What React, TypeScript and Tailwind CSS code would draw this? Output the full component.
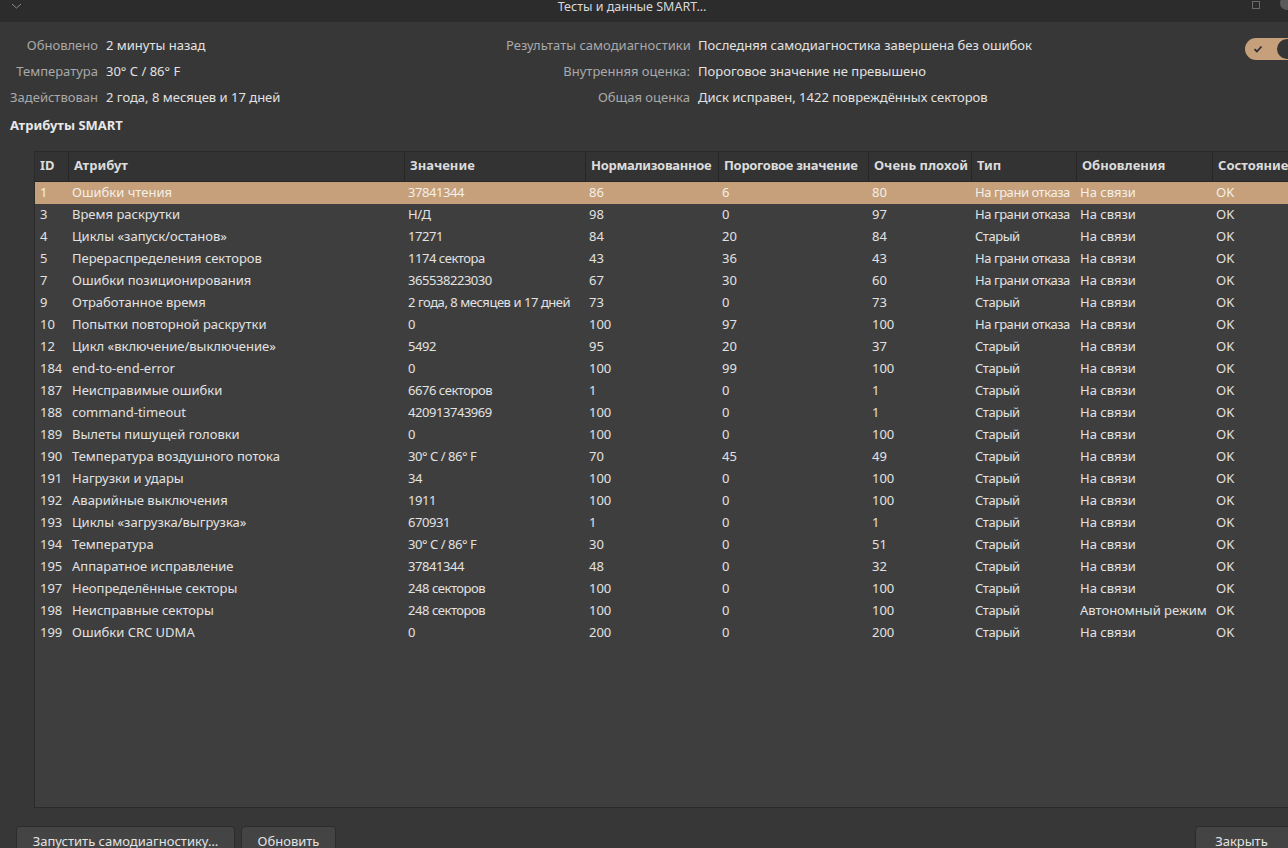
const rows: string[][] = [
  ["1", "Ошибки чтения", "37841344", "86", "6", "80", "На грани отказа", "На связи", "OK"],
  ["3", "Время раскрутки", "Н/Д", "98", "0", "97", "На грани отказа", "На связи", "OK"],
  ["4", "Циклы «запуск/останов»", "17271", "84", "20", "84", "Старый", "На связи", "OK"],
  ["5", "Перераспределения секторов", "1174 сектора", "43", "36", "43", "На грани отказа", "На связи", "OK"],
  ["7", "Ошибки позиционирования", "365538223030", "67", "30", "60", "На грани отказа", "На связи", "OK"],
  ["9", "Отработанное время", "2 года, 8 месяцев и 17 дней", "73", "0", "73", "Старый", "На связи", "OK"],
  ["10", "Попытки повторной раскрутки", "0", "100", "97", "100", "На грани отказа", "На связи", "OK"],
  ["12", "Цикл «включение/выключение»", "5492", "95", "20", "37", "Старый", "На связи", "OK"],
  ["184", "end-to-end-error", "0", "100", "99", "100", "Старый", "На связи", "OK"],
  ["187", "Неисправимые ошибки", "6676 секторов", "1", "0", "1", "Старый", "На связи", "OK"],
  ["188", "command-timeout", "420913743969", "100", "0", "1", "Старый", "На связи", "OK"],
  ["189", "Вылеты пишущей головки", "0", "100", "0", "100", "Старый", "На связи", "OK"],
  ["190", "Температура воздушного потока", "30° C / 86° F", "70", "45", "49", "Старый", "На связи", "OK"],
  ["191", "Нагрузки и удары", "34", "100", "0", "100", "Старый", "На связи", "OK"],
  ["192", "Аварийные выключения", "1911", "100", "0", "100", "Старый", "На связи", "OK"],
  ["193", "Циклы «загрузка/выгрузка»", "670931", "1", "0", "1", "Старый", "На связи", "OK"],
  ["194", "Температура", "30° C / 86° F", "30", "0", "51", "Старый", "На связи", "OK"],
  ["195", "Аппаратное исправление", "37841344", "48", "0", "32", "Старый", "На связи", "OK"],
  ["197", "Неопределённые секторы", "248 секторов", "100", "0", "100", "Старый", "На связи", "OK"],
  ["198", "Неисправные секторы", "248 секторов", "100", "0", "100", "Старый", "Автономный режим", "OK"],
  ["199", "Ошибки CRC UDMA", "0", "200", "0", "200", "Старый", "На связи", "OK"],
];

const headers = ["ID", "Атрибут", "Значение", "Нормализованное", "Пороговое значение", "Очень плохой", "Тип", "Обновления", "Состояние"];
const widths = ["w-[33px]", "w-[336px]", "w-[181px]", "w-[133px]", "w-[150px]", "w-[103px]", "w-[105px]", "w-[136px]", "w-[90px]"];

const info = [
  ["Обновлено", "2 минуты назад", "Результаты самодиагностики", "Последняя самодиагностика завершена без ошибок"],
  ["Температура", "30° C / 86° F", "Внутренняя оценка:", "Пороговое значение не превышено"],
  ["Задействован", "2 года, 8 месяцев и 17 дней", "Общая оценка", "Диск исправен, 1422 повреждённых секторов"],
];

export default function App() {
  return (
    <div
      className="w-[1288px] h-[848px] overflow-hidden bg-[#373737] text-[13px] text-[#e2e2e2] flex flex-col"
      style={{ fontFamily: '"Noto Sans", "Liberation Sans", sans-serif' }}
    >
      {/* title bar */}
      <div className="h-[22px] shrink-0 bg-[#2c2c2c] flex items-start relative">
        <svg className="ml-[11px] mt-[3px]" width="11" height="6" viewBox="0 0 11 6">
          <path d="M1 1l4.5 4L10 1" stroke="#8a8a8a" strokeWidth="1" fill="none" />
        </svg>
        <div className="flex-1 text-center text-[#d8d8d8] text-[12.5px] leading-[14px] pr-[10px]">Тесты и данные SMART…</div>
        <div className="w-[8px] h-[8px] border border-[#6a6a6a] mt-[1px] mr-[20px]" />
        <div className="w-[14px] h-[14px] rounded-full bg-[#5a5a5a] -mr-[6px] -mt-[4px]" />
      </div>

      {/* info */}
      <div className="flex pt-[11px]">
        <div className="grid grid-cols-[88px_392px_184px_auto] gap-x-2 pl-[10px] auto-rows-[26px] items-center">
          {info.map((r, i) => (
            <div key={i} className="contents">
              <div className="text-right text-[#a9a9a9] whitespace-nowrap">{r[0]}</div>
              <div className="whitespace-nowrap">{r[1]}</div>
              <div className="text-right text-[#a9a9a9] whitespace-nowrap">{r[2]}</div>
              <div className="whitespace-nowrap">{r[3]}</div>
            </div>
          ))}
        </div>
        <div className="ml-auto mt-[5px] -mr-[10px] w-[53px] h-[22px] rounded-full bg-[#c5a07b] flex items-center justify-between px-[1px]">
          <svg className="ml-[7px]" width="10" height="8" viewBox="0 0 10 8">
            <path d="M1.5 4.2l2.4 2.3L8.5 1.5" stroke="#2d2d3a" strokeWidth="1.8" fill="none" />
          </svg>
          <div className="w-[20px] h-[20px] rounded-full bg-[#353535]" />
        </div>
      </div>

      <div className="pl-[10px] pt-[5px] h-[29px] font-bold text-[#e8e8e8]">Атрибуты SMART</div>

      {/* table */}
      <div className="ml-[34px] mt-[15px] h-[657px] shrink-0 bg-[#3e3e3e] border border-[#2a2a2a] border-r-0 flex flex-col">
        <div className="flex h-[30px] shrink-0 bg-[#333333] border-b border-[#262626] font-bold text-[#dcdcdc]">
          {headers.map((h, i) => (
            <div
              key={i}
              className={`${widths[i]} shrink-0 flex items-center px-[5px] whitespace-nowrap ${i > 0 ? "border-l border-[#262626]" : ""} ${i === 3 || i === 4 ? "tracking-[-0.3px]" : ""}`}
            >
              {h}
            </div>
          ))}
        </div>
        {rows.map((r, ri) => (
          <div key={ri} className={`flex h-[22px] shrink-0 ${ri === 0 ? "bg-[#c5a07b] text-[#f4efe9]" : ""}`}>
            {r.map((c, ci) => (
              <div
                key={ci}
                className={`${widths[ci]} shrink-0 flex items-center whitespace-nowrap ${ci === 0 ? "pl-[5px]" : "pl-[4px]"} ${ci === 6 || ci === 2 ? "tracking-[-0.45px]" : ""}`}
              >
                {c}
              </div>
            ))}
          </div>
        ))}
      </div>

      {/* buttons */}
      <div className="flex mt-[18px] px-[16px] gap-[6px]">
        <button className="h-[34px] shrink-0 whitespace-nowrap rounded-[4px] bg-[#444444] border border-[#2c2c2c] text-[#e2e2e2] pb-[2px] w-[219px]">
          Запустить самодиагностику…
        </button>
        <button className="h-[34px] shrink-0 whitespace-nowrap rounded-[4px] bg-[#444444] border border-[#2c2c2c] text-[#e2e2e2] pb-[2px] w-[95px]">
          Обновить
        </button>
        <button className="ml-auto -mr-[30px] h-[34px] shrink-0 whitespace-nowrap rounded-[4px] bg-[#444444] border border-[#2c2c2c] text-[#e2e2e2] pb-[2px] w-[107px] pr-[14px]">
          Закрыть
        </button>
      </div>
    </div>
  );
}
